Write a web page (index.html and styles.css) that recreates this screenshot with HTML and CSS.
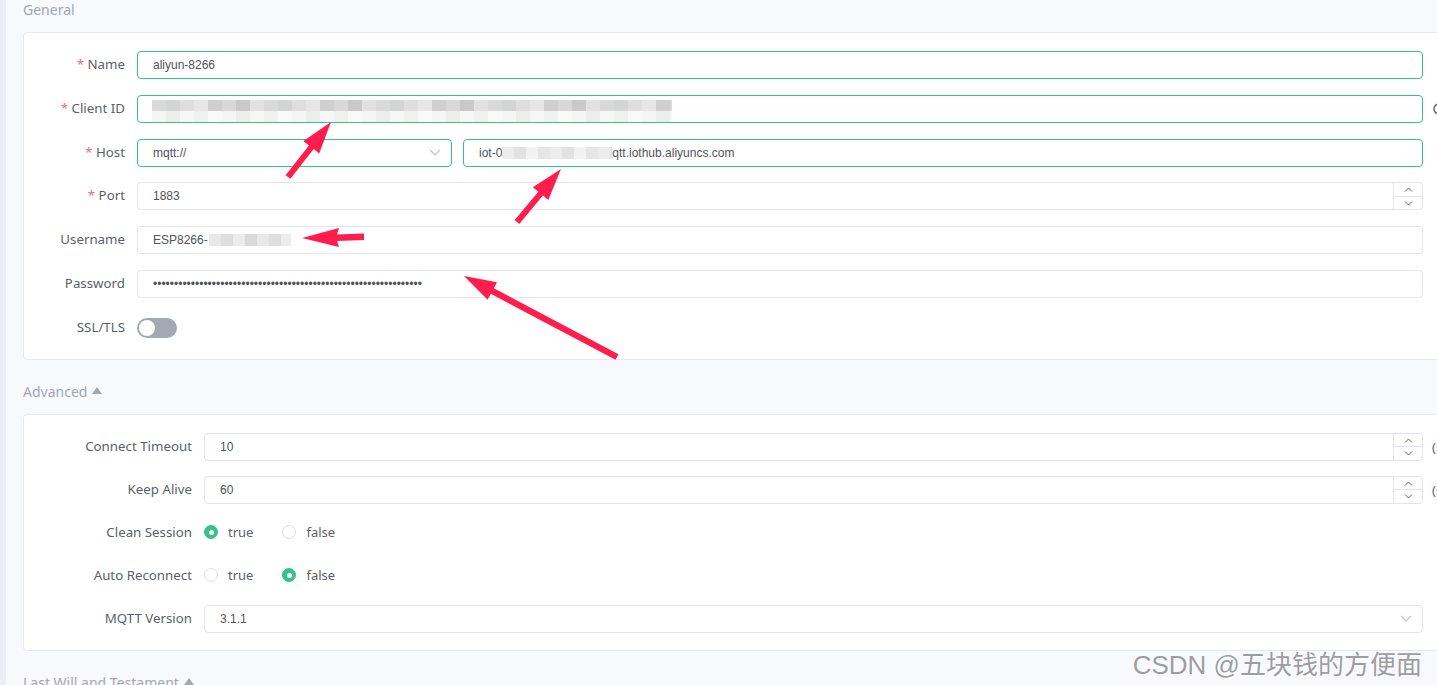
FILE: index.html
```html
<!DOCTYPE html>
<html lang="en">
<head>
  <meta charset="UTF-8">
  <title>New Connection</title>
  <link rel="stylesheet" href="styles.css">
</head>
<body>

  <div class="layout">
    <div class="rail"></div>

    <main class="content">
      <div class="section-title">General</div>
      <div class="card">
        <div class="form-row">
          <div class="form-label"><span class="req">*</span> Name</div>
          <div class="control"><div class="input focus">aliyun-8266</div></div>
          <div class="suffix"></div>
        </div>
        <div class="form-row">
          <div class="form-label"><span class="req">*</span> Client ID</div>
          <div class="control">
            <div class="input focus"><span class="blur blur-id"><span class="blur-top"></span><span class="blur-bottom"></span></span></div>
          </div>
          <div class="suffix">
            <svg class="refresh" width="14" height="14" viewBox="0 0 14 14"><path d="M12 7a5 5 0 1 1-1.5-3.6" fill="none" stroke="#5b5f67" stroke-width="1.4"/><path d="M11 1v3h-3" fill="none" stroke="#5b5f67" stroke-width="1.4"/></svg>
          </div>
        </div>
        <div class="form-row">
          <div class="form-label"><span class="req">*</span> Host</div>
          <div class="control host">
            <div class="input select focus">
              <span>mqtt://</span>
              <svg width="12" height="7" viewBox="0 0 12 7"><path d="M1 1l5 5 5-5" fill="none" stroke="#c0c4cc" stroke-width="1.2"/></svg>
            </div>
            <div class="input focus grow">iot-0<span class="blur blur-host"></span>qtt.iothub.aliyuncs.com</div>
          </div>
          <div class="suffix"></div>
        </div>
        <div class="form-row">
          <div class="form-label"><span class="req">*</span> Port</div>
          <div class="control">
            <div class="input number">
              <span class="num-value">1883</span>
              <span class="spin">
                <span class="spin-btn"><svg width="9" height="5" viewBox="0 0 9 5"><path d="M1 4.5L4.5 1 8 4.5" fill="none" stroke="#606266" stroke-width="1"/></svg></span>
                <span class="spin-btn"><svg width="9" height="5" viewBox="0 0 9 5"><path d="M1 0.5L4.5 4 8 0.5" fill="none" stroke="#606266" stroke-width="1"/></svg></span>
              </span>
            </div>
          </div>
          <div class="suffix"></div>
        </div>
        <div class="form-row">
          <div class="form-label">Username</div>
          <div class="control"><div class="input">ESP8266-<span class="blur blur-user"></span></div></div>
          <div class="suffix"></div>
        </div>
        <div class="form-row">
          <div class="form-label">Password</div>
          <div class="control"><div class="input password">&bull;&bull;&bull;&bull;&bull;&bull;&bull;&bull;&bull;&bull;&bull;&bull;&bull;&bull;&bull;&bull;&bull;&bull;&bull;&bull;&bull;&bull;&bull;&bull;&bull;&bull;&bull;&bull;&bull;&bull;&bull;&bull;&bull;&bull;&bull;&bull;&bull;&bull;&bull;&bull;&bull;&bull;&bull;&bull;&bull;&bull;&bull;&bull;&bull;&bull;&bull;&bull;&bull;&bull;&bull;&bull;&bull;&bull;&bull;&bull;&bull;&bull;&bull;&bull;</div></div>
          <div class="suffix"></div>
        </div>
        <div class="form-row">
          <div class="form-label">SSL/TLS</div>
          <div class="control"><span class="switch"><span class="knob"></span></span></div>
          <div class="suffix"></div>
        </div>
      </div>

      <div class="section-title">Advanced <span class="caret"></span></div>
      <div class="card advanced">
        <div class="form-row">
          <div class="form-label">Connect Timeout</div>
          <div class="control">
            <div class="input number">
              <span class="num-value">10</span>
              <span class="spin">
                <span class="spin-btn"><svg width="9" height="5" viewBox="0 0 9 5"><path d="M1 4.5L4.5 1 8 4.5" fill="none" stroke="#606266" stroke-width="1"/></svg></span>
                <span class="spin-btn"><svg width="9" height="5" viewBox="0 0 9 5"><path d="M1 0.5L4.5 4 8 0.5" fill="none" stroke="#606266" stroke-width="1"/></svg></span>
              </span>
            </div>
          </div>
          <div class="suffix">(s)</div>
        </div>
        <div class="form-row">
          <div class="form-label">Keep Alive</div>
          <div class="control">
            <div class="input number">
              <span class="num-value">60</span>
              <span class="spin">
                <span class="spin-btn"><svg width="9" height="5" viewBox="0 0 9 5"><path d="M1 4.5L4.5 1 8 4.5" fill="none" stroke="#606266" stroke-width="1"/></svg></span>
                <span class="spin-btn"><svg width="9" height="5" viewBox="0 0 9 5"><path d="M1 0.5L4.5 4 8 0.5" fill="none" stroke="#606266" stroke-width="1"/></svg></span>
              </span>
            </div>
          </div>
          <div class="suffix">(s)</div>
        </div>
        <div class="form-row">
          <div class="form-label">Clean Session</div>
          <div class="control radios">
            <span class="radio"><span class="dot checked"></span>true</span>
            <span class="radio"><span class="dot"></span>false</span>
          </div>
          <div class="suffix"></div>
        </div>
        <div class="form-row">
          <div class="form-label">Auto Reconnect</div>
          <div class="control radios">
            <span class="radio"><span class="dot"></span>true</span>
            <span class="radio"><span class="dot checked"></span>false</span>
          </div>
          <div class="suffix"></div>
        </div>
        <div class="form-row">
          <div class="form-label">MQTT Version</div>
          <div class="control">
            <div class="input select">
              <span>3.1.1</span>
              <svg width="12" height="7" viewBox="0 0 12 7"><path d="M1 1l5 5 5-5" fill="none" stroke="#c0c4cc" stroke-width="1.2"/></svg>
            </div>
          </div>
          <div class="suffix"></div>
        </div>
      </div>

      <div class="section-title">Last Will and Testament <span class="caret"></span></div>
    </main>
  </div>

  <!-- annotation arrows drawn over the form -->
  <svg class="arrows" width="1437" height="685" viewBox="0 0 1437 685">
    <g fill="#ff1d4d">
      <polygon points="290.4,178.8 313.7,149 319.2,153.4 331,122 303.4,141 308.9,145.4 285.6,175.2"/>
      <polygon points="519.3,223.9 542.9,195.5 548.3,200 561,169 532.9,187.2 538.3,191.7 514.7,220.1"/>
      <polygon points="364,233.5 337,234.5 339,228 302,238 339,247 337,241 364,240"/>
      <polygon points="618.5,354.2 493.8,288.2 497,282.2 464,276 487.6,299.8 490.8,293.8 615.5,359.8"/>
    </g>
  </svg>

  <div class="watermark">CSDN @五块钱的方便面</div>

</body>
</html>
```

FILE: styles.css
```css
body {
  margin: 0;
  height: 685px;
  overflow: hidden;
  position: relative;
  background: #f8f9fc;
  font-family: 'Noto Sans', sans-serif;
  color: #5b5f67;
}

.layout {
  display: flex;
  height: 100%;
}

.rail {
  width: 6px;
  flex-shrink: 0;
  background: #eceef4;
}

.content {
  flex: 1;
  min-width: 0;
  padding-left: 17px;
}

.section-title {
  font-size: 14px;
  line-height: 20px;
  color: #a2a7b3;
  margin-bottom: 12px;
  display: flex;
  align-items: center;
  gap: 5px;
}

.caret {
  width: 0;
  height: 0;
  border-left: 5.5px solid transparent;
  border-right: 5.5px solid transparent;
  border-bottom: 7px solid #a2a7b3;
  margin-top: -2px;
}

.card {
  background: #fff;
  border: 1px solid #e8e9f0;
  border-radius: 4px;
  margin-right: -60px;
  padding: 18px 0 17px;
  margin-bottom: 22px;
}

.form-row {
  display: flex;
  align-items: center;
  height: 28px;
  margin-bottom: 15.8px;
}

.form-row:last-child {
  margin-bottom: 0;
}

.advanced .form-row {
  margin-bottom: 15px;
}

.advanced .form-row:last-child {
  margin-bottom: 0;
}

.form-label {
  width: 113px;
  flex-shrink: 0;
  box-sizing: border-box;
  padding-right: 12px;
  padding-bottom: 2px;
  text-align: right;
  font-size: 13.3px;
  line-height: 26px;
  color: #5b5f67;
  white-space: nowrap;
}

.advanced .form-label {
  width: 180px;
}

.req {
  color: #f56c6c;
}

.control {
  flex: 1;
  min-width: 0;
  display: flex;
  align-items: center;
  height: 28px;
}

.suffix {
  width: 73px;
  flex-shrink: 0;
  box-sizing: border-box;
  padding-left: 9px;
  font-size: 13px;
  color: #5b5f67;
  display: flex;
  align-items: center;
}

.input {
  flex: 1;
  box-sizing: border-box;
  height: 28px;
  border: 1px solid #e3e4ee;
  border-radius: 4px;
  padding: 0 15px;
  font-family: 'Liberation Sans', Arial, sans-serif;
  font-size: 12px;
  color: #505358;
  display: flex;
  align-items: center;
  white-space: nowrap;
  overflow: hidden;
}

.input.focus {
  border-color: #34c388;
}

.host {
  gap: 11px;
}

.select {
  justify-content: space-between;
  padding-right: 10px;
}

.host .select {
  flex: 0 0 315px;
}

.password {
  color: #505358;
}

.blur {
  display: inline-block;
  flex-shrink: 0;
}

.blur-id {
  width: 520px;
  height: 24px;
  margin-left: -1px;
  margin-top: 6px;
  display: flex;
  flex-direction: column;
}

.blur-top {
  height: 11px;
  background: repeating-linear-gradient(90deg, #d9d9d9 0 14px, #d3d4d4 14px 28px, #dedede 28px 42px, #e6e6e6 42px 56px, #cfcfcf 56px 70px, #d8d8d8 70px 84px, #c9c9c9 84px 98px, #e1e1e1 98px 112px);
}

.blur-bottom {
  height: 13px;
  background: repeating-linear-gradient(90deg, #f3f6f4 0 14px, #eaeeec 14px 28px, #f6f8f7 28px 42px, #edf1ef 42px 56px, #f8faf9 56px 70px);
}

.blur-host {
  width: 110px;
  height: 12px;
  background: repeating-linear-gradient(90deg, #ececec 0 12px, #e2e2e2 12px 24px, #f2f2f2 24px 36px, #e6e6e6 36px 48px);
}

.blur-user {
  width: 82px;
  height: 12px;
  margin-left: 1px;
  background: repeating-linear-gradient(90deg, #e8e8e8 0 12px, #dedede 12px 24px, #ececec 24px 36px, #d9d9d9 36px 48px);
}

.number {
  padding-right: 0;
}

.num-value {
  flex: 1;
}

.spin {
  width: 28px;
  height: 100%;
  border-left: 1px solid #e3e4ee;
  display: flex;
  flex-direction: column;
}

.spin-btn {
  flex: 1;
  display: flex;
  align-items: center;
  justify-content: center;
}

.spin-btn + .spin-btn {
  border-top: 1px solid #e3e4ee;
}

.switch {
  position: relative;
  width: 40px;
  height: 20px;
  border-radius: 10px;
  background: #a3a9b3;
}

.knob {
  position: absolute;
  top: 2px;
  left: 2px;
  width: 16px;
  height: 16px;
  border-radius: 50%;
  background: #fff;
}

.radios {
  font-size: 13px;
  color: #5b5f67;
}

.radio {
  display: flex;
  align-items: center;
  gap: 10px;
  margin-right: 29px;
  padding-bottom: 1px;
}

.dot {
  box-sizing: border-box;
  width: 14px;
  height: 14px;
  border-radius: 50%;
  border: 1px solid #dcdfe6;
  background: #fff;
  position: relative;
}

.dot.checked {
  border-color: #34c388;
  background: #34c388;
}

.dot.checked::after {
  content: '';
  position: absolute;
  top: 50%;
  left: 50%;
  width: 5px;
  height: 5px;
  margin: -2.5px 0 0 -2.5px;
  border-radius: 50%;
  background: #fff;
}

.refresh {
  flex-shrink: 0;
}

.arrows {
  position: absolute;
  top: 0;
  left: 0;
  pointer-events: none;
}

.watermark {
  position: absolute;
  right: 15px;
  bottom: 7px;
  font-family: 'Liberation Sans', 'Noto Sans CJK SC', sans-serif;
  font-size: 26px;
  line-height: 1;
  color: rgba(140, 140, 140, 0.85);
  text-shadow: 1px 1px 1px rgba(255, 255, 255, 0.8);
  white-space: nowrap;
}
```
